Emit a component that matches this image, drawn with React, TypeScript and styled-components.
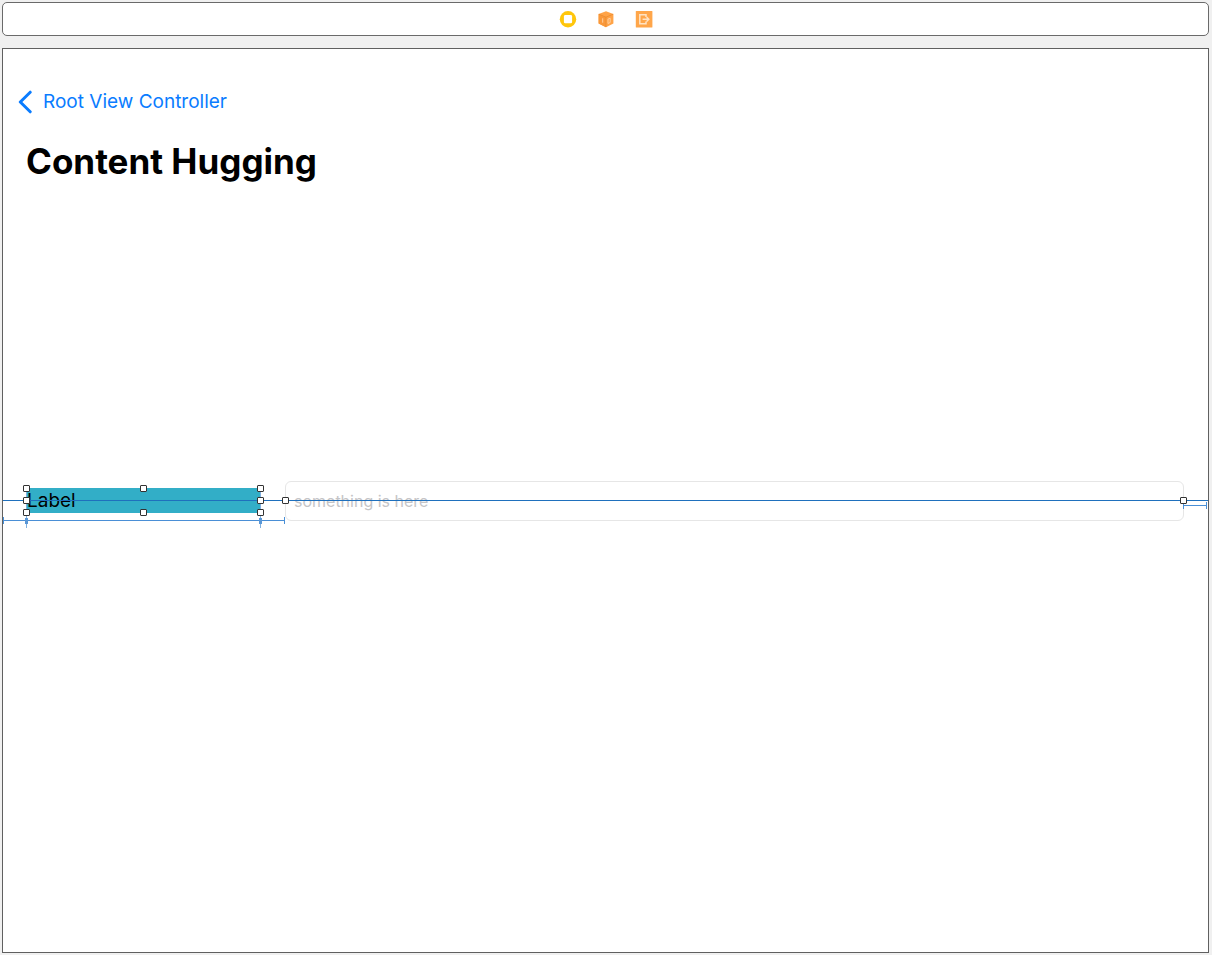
import React from "react";
import styled, { createGlobalStyle } from "styled-components";

const GlobalStyle = createGlobalStyle`
  *, *::before, *::after { box-sizing: border-box; }
  body {
    margin: 0;
    background: #f0f0f0;
    font-family: Inter, "Liberation Sans", sans-serif;
    color: #000;
  }
`;

const Page = styled.div`
  min-height: 100vh;
  padding: 2px 3px 2px 2px;
  display: flex;
  flex-direction: column;
  gap: 12px;
`;

const SceneDock = styled.header`
  height: 34px;
  display: flex;
  align-items: center;
  justify-content: center;
  gap: 20px;
  background: #fff;
  border: 1px solid #6a6a6a;
  border-radius: 5px;
`;

const DockButton = styled.button`
  width: 18px;
  height: 18px;
  padding: 0;
  border: 0;
  background: none;
  display: flex;

  svg { display: block; }
`;

const Canvas = styled.main`
  flex: 1;
  display: grid;
  grid-template-rows: 1fr auto 1fr;
  background: #fff;
  border: 1px solid #606060;
`;

const NavBar = styled.nav`
  padding: 40px 24px 0 15px;
`;

const BackLink = styled.a`
  display: inline-flex;
  align-items: center;
  gap: 11px;
  font-size: 19px;
  line-height: 26px;
  color: #0a7cff;
  text-decoration: none;

  svg { display: block; }
`;

const Title = styled.h1`
  margin: 19px 0 0 8px;
  font-size: 35px;
  line-height: 48px;
  font-weight: 700;
`;

const FormRow = styled.div`
  position: relative;
  display: flex;
  align-items: center;
  gap: 24px;
  padding: 0 24px;
`;

const LabelBox = styled.div`
  flex: 0 0 234px;
  height: 25px;
  background: #32aec7;
`;

const FieldLabel = styled.label`
  display: block;
  font-size: 19px;
  line-height: 26px;
`;

const FieldBox = styled.div`
  flex: 1;
`;

const Field = styled.input`
  display: block;
  width: 100%;
  height: 40px;
  padding: 0 8px;
  border: 1px solid #e6e6e6;
  border-radius: 6px;
  background: #fff;
  font: 16px/24px Inter, "Liberation Sans", sans-serif;

  &::placeholder { color: #c5c5c7; opacity: 1; }
`;

const Baseline = styled.div`
  position: absolute;
  left: 0;
  right: 0;
  top: calc(50% - 1px);
  height: 1px;
  background: #1f70bd;
`;

const Handle = styled.span<{ $x: string; $y: string }>`
  position: absolute;
  left: ${(p) => p.$x};
  top: ${(p) => p.$y};
  width: 7px;
  height: 7px;
  margin: -4px 0 0 -4px;
  background: #fff;
  border: 1px solid #333;
  border-radius: 1px;
`;

const Spacer = styled.div<{ $left: string; $width: string; $top: string }>`
  position: absolute;
  left: ${(p) => p.$left};
  top: ${(p) => p.$top};
  width: ${(p) => p.$width};
  height: 7px;
  border: solid #4a8fd6;
  border-width: 0 1px;

  &::before {
    content: "";
    position: absolute;
    left: 0;
    right: 0;
    top: 3px;
    height: 1px;
    background: #4a8fd6;
  }
`;

const EdgeMark = styled.span<{ $left: string }>`
  position: absolute;
  left: ${(p) => p.$left};
  top: 0;
  width: 1px;
  height: 39px;
  background: #7fb0e0;

  &::after {
    content: "";
    position: absolute;
    left: -1px;
    bottom: 4px;
    width: 3px;
    height: 6px;
    background: #5a97d6;
  }
`;

const LabelSelection = styled.div`
  position: absolute;
  left: 24px;
  top: 8px;
  width: 234px;
  height: 24px;
`;

const FieldSelection = styled.div`
  position: absolute;
  left: 283px;
  right: 24px;
  top: 0;
  bottom: 0;
`;

const labelHandles = [
  ["0%", "0%"], ["50%", "0%"], ["100%", "0%"],
  ["0%", "50%"], ["100%", "50%"],
  ["0%", "100%"], ["50%", "100%"], ["100%", "100%"],
];

const ControllerIcon = () => (
  <svg width="18" height="18" viewBox="0 0 18 18" aria-hidden="true">
    <circle cx="9" cy="9.2" r="8.2" fill="#ffc60b" />
    <rect x="4.9" y="5.1" width="8.2" height="8.2" rx="1.4" fill="#fff" />
  </svg>
);

const ResponderIcon = () => (
  <svg width="18" height="18" viewBox="0 0 18 18" aria-hidden="true">
    <path d="M9 1.2 16.4 4V13.6L9 17.2 1.6 13.6V4Z" fill="#ffa347" />
    <path d="M1.6 4 9 7.2V17.2L1.6 13.6Z" fill="#f9983a" />
    <path d="M1.9 4.2 9 7.2l7.1-3M9 7.2v9.6" fill="none" stroke="#e98a30" strokeWidth=".8" />
    <path d="M5.7 8.3v4.4M11 9.1l2.2-.8v4.2l-2.2 1z" fill="none" stroke="#ffcf9f" strokeWidth="1" />
  </svg>
);

const ExitIcon = () => (
  <svg width="18" height="18" viewBox="0 0 18 18" aria-hidden="true">
    <rect x=".8" y="1" width="16.6" height="16.6" rx=".5" fill="#ffa64a" />
    <path d="M11 7V4.8H4.8v9H11v-2.2M7.6 9.3h5.6M11.6 7.1l2.2 2.2-2.2 2.2" fill="none" stroke="#ffe3c4" strokeWidth="1.5" />
  </svg>
);

const BackIcon = () => (
  <svg width="14" height="24" viewBox="0 0 14 24" aria-hidden="true">
    <path d="M12.2 2.2 2.3 12l9.9 9.8" fill="none" stroke="#0a7cff" strokeWidth="3" strokeLinecap="round" strokeLinejoin="round" />
  </svg>
);

export default function App() {
  return (
    <>
      <GlobalStyle />
      <Page>
        <SceneDock>
          <DockButton type="button" aria-label="View Controller"><ControllerIcon /></DockButton>
          <DockButton type="button" aria-label="First Responder"><ResponderIcon /></DockButton>
          <DockButton type="button" aria-label="Exit"><ExitIcon /></DockButton>
        </SceneDock>
        <Canvas>
          <NavBar>
            <BackLink href="#root-view"><BackIcon />Root View Controller</BackLink>
            <Title>Content Hugging</Title>
          </NavBar>
          <FormRow>
            <LabelBox>
              <FieldLabel htmlFor="something">Label</FieldLabel>
            </LabelBox>
            <FieldBox>
              <Field id="something" type="text" placeholder="something is here" />
            </FieldBox>
            <Baseline />
            <Spacer $left="0px" $width="24px" $top="36px" />
            <Spacer $left="23px" $width="235px" $top="36px" />
            <Spacer $left="257px" $width="25px" $top="36px" />
            <Spacer $left="calc(100% - 25px)" $width="24px" $top="21px" />
            <LabelSelection>
              <EdgeMark $left="-1px" />
              <EdgeMark $left="233px" />
              {labelHandles.map(([x, y]) => (
                <Handle key={x + y} $x={x} $y={y} />
              ))}
            </LabelSelection>
            <FieldSelection>
              <Handle $x="0%" $y="50%" />
              <Handle $x="100%" $y="50%" />
            </FieldSelection>
          </FormRow>
        </Canvas>
      </Page>
    </>
  );
}
